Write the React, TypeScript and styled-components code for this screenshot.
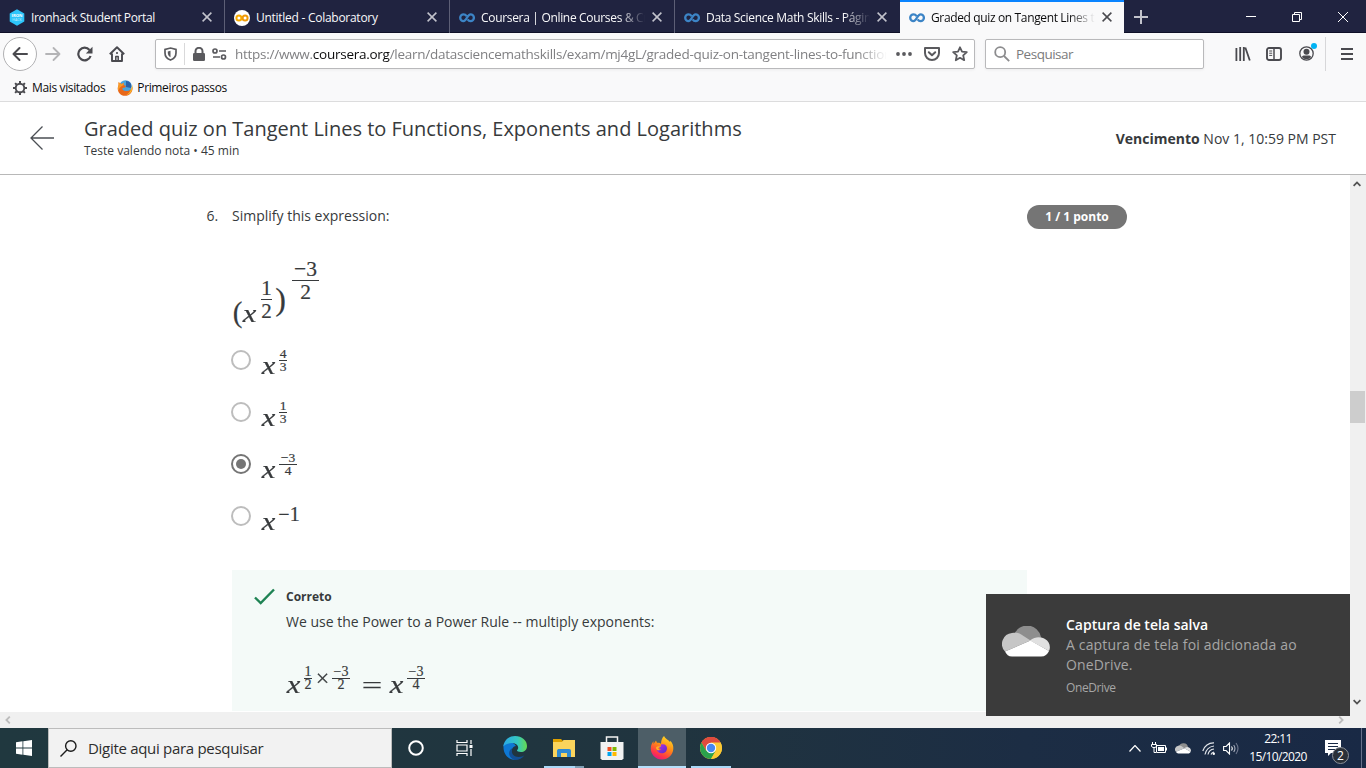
import React from 'react';
import styled, { createGlobalStyle, css } from 'styled-components';

const Global = createGlobalStyle`
  * { box-sizing: border-box; }
  body { margin: 0; width: 1366px; height: 768px; overflow: hidden; background: #fff; }
  svg { display: block; flex: none; }
`;

const ui = css`font-family: "Open Sans", "Noto Sans", sans-serif;`;

const Screen = styled.div`
  ${ui}
  width: 1366px; height: 768px; display: flex; flex-direction: column; overflow: hidden;
  color: #373a3c; white-space: nowrap;
`;

/* ---------- tab strip ---------- */
const TabStrip = styled.div`
  height: 33px; display: flex; background: #202340; box-shadow: inset 0 -1px #0f1028;
`;
const Tab = styled.div<{ $active?: boolean }>`
  width: ${p => (p.$active ? 224 : 225)}px; height: 33px; display: flex; align-items: center;
  padding: ${p => (p.$active ? 0 : 2)}px 12px 0 9px;
  border-right: ${p => (p.$active ? 'none' : '1px solid #5d5f76')};
  border-top: ${p => (p.$active ? '2px solid #0a84ff' : 'none')};
  background: ${p => (p.$active ? '#f9f9fa' : 'transparent')};
  color: ${p => (p.$active ? '#0c0c0d' : '#f9f9fa')};
  &:nth-child(4) { border-right-color: transparent; }
  svg.close { color: ${p => (p.$active ? '#4a4a4f' : '#c2c3cc')}; margin-left: 5px; margin-top: -1px; }
`;
const TabLabel = styled.span<{ $ls: number; $fade?: boolean }>`
  flex: 1; margin-left: 6px; overflow: hidden; font-size: 12px; line-height: 18px; 
  letter-spacing: ${p => p.$ls}px;
  ${p => p.$fade && css`mask-image: linear-gradient(to left, transparent 2px, #000 28px);`}
`;
const NewTab = styled.div`width: 34px; display: flex; align-items: center; justify-content: center; color: #c2c3cc;`;
const WindowButtons = styled.div`
  margin-left: auto; display: flex; align-items: center; color: #fff;
  > span { width: 46px; display: flex; justify-content: center; }
`;

/* ---------- toolbar ---------- */
const Toolbar = styled.div`
  height: 41px; display: flex; align-items: center; background: #f9f9fa; padding: 0 10px 0 3px; color: #4a4a4f;
`;
const BackButton = styled.div`
  width: 34px; height: 34px; border: 1px solid #b1b1b3; border-radius: 50%; background: #fff;
  display: flex; align-items: center; justify-content: center;
`;
const ToolIcon = styled.div<{ $ml: number; $dim?: boolean }>`
  margin-left: ${p => p.$ml}px; color: ${p => (p.$dim ? '#b4b4b6' : '#4a4a4f')};
  position: relative;
`;
const Field = styled.div<{ $w: number; $ml: number }>`
  width: ${p => p.$w}px; margin-left: ${p => p.$ml}px; height: 30px; background: #fff;
  border: 1px solid #b9b9bb; border-radius: 2px; display: flex; align-items: center; 
  color: #5a5a5e; box-shadow: 0 1px 3px rgba(0,0,0,.06);
`;
const FieldRule = styled.div`width: 1px; height: 22px; background: #d9d9da; margin: 0 8px 0 7px;`;
const Url = styled.div`
  width: 652px; margin-left: 8px; overflow: hidden; font-size: 13.5px; line-height: 20px; letter-spacing: -0.26px; color: #808083;
  mask-image: linear-gradient(to left, transparent 0, #000 30px);
  b { font-weight: 400; color: #0c0c0d; }
`;
const Placeholder = styled.span`margin-left: 6px; font-size: 13.5px; letter-spacing: -0.5px; color: #7b7b7d;`;
const ToolRule = styled.div`width: 1px; height: 34px; background: #d7d7d9; margin-left: 11px;`;
const Dot = styled.i`position: absolute; left: 12px; top: -3px; width: 6px; height: 6px; border-radius: 50%; background: #00b3f4;`;

const Bookmarks = styled.div`
  height: 28px; background: #f9f9fa; border-bottom: 1px solid #dcdcdd; display: flex; align-items: center; padding: 0 0 0 12px;
  font-size: 12px; color: #0c0c0d;
  span { margin-left: 4px; letter-spacing: -0.36px; }
  svg + span + svg { margin-left: 12px; }
`;

/* ---------- page header ---------- */
const PageHeader = styled.header`
  height: 73px; background: #fff; border-bottom: 1px solid #b8b8b8; display: flex; align-items: center; padding: 0 30px;
`;
const TitleGroup = styled.div`margin-left: 30px; margin-top: 1px; flex: 1;`;
const Title = styled.h1`margin: 0; font-size: 20px; line-height: 24px; font-weight: 400; color: #373a3c;`;
const Subtitle = styled.div`font-size: 12px; line-height: 18px; margin-top: 1px; color: #373a3c;`;
const Due = styled.div`font-size: 14px; line-height: 20px; margin-top: 1px; `;

/* ---------- quiz ---------- */
const Viewport = styled.div`height: 537px; display: flex; background: #fff;`;
const Quiz = styled.main`width: 1350px; height: 537px; overflow: hidden; display: flex; padding: 30px 0 0 206px;`;
const Number = styled.div`width: 26px; padding-left: .5px; font-size: 14px; line-height: 22px;`;
const Body = styled.div`width: 795px;`;
const Prompt = styled.div`font-size: 14px; line-height: 22px;`;
const Points = styled.div`
  width: 100px; height: 24px; border-radius: 12px; background: #757575; color: #fff; font-size: 12px; font-weight: 700;
  line-height: 24px; text-align: center;
`;
const MathRow = styled.div<{ $h: number; $mt?: number }>`
  height: ${p => p.$h}px; margin-top: ${p => p.$mt || 0}px; display: flex; align-items: flex-start;
  font-family: "Liberation Serif", "Times New Roman", serif; color: #373a3c; -webkit-text-stroke: .2px #373a3c;
`;
/* One glyph run: fixed advance, optical stretch and drop from the row's top. */
const Sym = styled.span<{ $w: number; $s: number; $t?: number; $l?: number; $x?: number; $y?: number; $i?: boolean }>`
  width: ${p => p.$w}px; font-size: ${p => p.$s}px; line-height: ${p => p.$s}px; margin-top: ${p => p.$t || 0}px; margin-left: ${p => p.$l || 0}px;
  font-style: ${p => (p.$i ? 'italic' : 'normal')}; display: flex; justify-content: center;
  transform: scale(${p => p.$x || 1}, ${p => p.$y || 1});
`;
const FracBox = styled.span<{ $w: number; $s: number; $t?: number; $l?: number; $gap: number }>`
  width: ${p => p.$w}px; margin-top: ${p => p.$t || 0}px; margin-left: ${p => p.$l || 0}px;
  font-size: ${p => p.$s}px; line-height: ${p => p.$gap}px; text-align: center;
  display: flex; flex-direction: column; align-items: center;
  i { display: block; width: 100%; height: 1px; background: #373a3c; }
  span { display: flex; height: ${p => p.$gap}px; }
`;
const Option = styled.div`height: 52px; display: flex; align-items: flex-start;`;
const Radio = styled.div<{ $on?: boolean }>`
  width: 20px; height: 20px; margin: 2px 11px 0 -1px; border-radius: 50%; border: 2px solid ${p => (p.$on ? '#757575' : '#bdbdbd')};
  display: flex; align-items: center; justify-content: center;
  &::after { content: ''; width: 10px; height: 10px; border-radius: 50%; background: ${p => (p.$on ? '#757575' : 'transparent')}; }
`;
const Feedback = styled.section`
  margin-top: 14px; height: 141px; background: #f4faf8; display: flex; padding: 18px 0 0 22px;
`;
const FeedbackBody = styled.div`margin-left: 11px; `;
const FeedbackTitle = styled.div`font-size: 12px; line-height: 18px; font-weight: 700;`;
const FeedbackText = styled.div`font-size: 14px; line-height: 22px; margin-top: 5px;`;

const VScroll = styled.div`
  width: 16px; background: #f0f0f0; display: flex; flex-direction: column; align-items: flex-start; padding: 5px 0 6px;
  > i { width: 15px; height: 32px; background: #cdcdcd; margin-top: 203px; }
  > svg { margin-left: 3px; }
  > svg:last-child { margin-top: auto; }
`;
const HScroll = styled.div`
  height: 16px; background: #f0f0f0; display: flex; align-items: center; justify-content: space-between; padding: 0 21px 1px 4px;
`;

/* ---------- taskbar ---------- */
const Taskbar = styled.footer`
  height: 40px; display: flex; background: linear-gradient(90deg, #20383f 0, #20343f 50%, #1c2d44 75%, #192945 100%); color: #fff;
`;
const Start = styled.div`width: 48px; display: flex; align-items: center; justify-content: center;`;
const SearchBox = styled.div`
  width: 344px; background: #f2f2f2; border: 1px solid #bcbcbc; display: flex; align-items: center; padding-left: 11px; color: #1c1c1c;
  span { font-size: 15px; letter-spacing: -0.3px; margin-left: 11px; color: #2d2d2d; }
`;
const App48 = styled.div<{ $on?: boolean; $line?: string; $w?: number }>`
  width: ${p => p.$w || 49}px; display: flex; align-items: center; justify-content: center;
  background: ${p => (p.$on ? '#4d5e67' : 'transparent')};
  ${p => p.$line && css`
    background-image: ${p.$line}; background-repeat: no-repeat; background-size: ${p.$on ? '100%' : '40px'} 2px; background-position: center bottom;`}
`;
const Tray = styled.div`margin-left: auto; display: flex; align-items: center;`;
const Clock = styled.div`
  width: 60px; margin: 0 16px 0 8px; text-align: center; font-size: 12px; line-height: 18px; letter-spacing: -0.62px;
`;
const Action = styled.div`position: relative; width: 37px; height: 40px; padding: 12px 0 0 1px;`;
const Badge = styled.b`
  position: absolute; left: 8px; top: 19px; width: 17px; height: 17px; border-radius: 50%; background: #2a3038; border: 1px solid #8b9098;
  font-size: 12px; font-weight: 400; line-height: 15px; text-align: center;
`;
const Peek = styled.i`width: 1px; height: 40px; background: #66708a; margin-right: 4px;`;

/* ---------- toast ---------- */
const Toast = styled.aside`
  position: absolute; left: 986px; top: 594px; width: 364px; height: 122px; background: #3b3b3b; display: flex; padding: 21px 0 0 16px;
  font-size: 15px; line-height: 20px; color: #a6a6a6;
  svg { margin-top: 11px; }
`;
const ToastText = styled.div`margin-left: 16px;`;
const ToastTitle = styled.div`font-size: 14px; font-weight: 600; color: #fff; letter-spacing: 0;`;
const ToastLine = styled.div`font-size: 14px; letter-spacing: 0.15px; `;
const ToastSource = styled.div`font-size: 12px; margin-top: 3px; letter-spacing: -0.4px;`;

const Close = () => (
  <svg className="close" width="10" height="10" viewBox="0 0 10 10" stroke="currentColor" strokeWidth="1.5"><path d="M.6.6 9.4 9.4M9.4.6.6 9.4" /></svg>
);
const CourseraIcon = () => (
  <svg width="16" height="16" viewBox="0 0 16 16" fill="none" stroke="#3c84c6" strokeWidth="2.3">
    <path d="M7.6 6.1C6.6 4.7 5.6 4.3 4.6 4.3a3.4 3.4 0 1 0 0 6.8c2.8 0 3.9-6.8 6.9-6.8a3.2 3.2 0 1 1 0 6.8c-1.300 0-2.200-.7-2.900-1.700" />
  </svg>
);
const IronIcon = () => (
  <svg width="16" height="17" viewBox="0 0 16 17"><path fill="#2dc5fa" d="M8 .3 15.300 4.400v8.200L8 16.700.7 12.600V4.400z" />
    <text x="8" y="7.600" textAnchor="middle" fontSize="4.200" fontWeight="700" fill="#fff" fontFamily="Open Sans">IRON</text>
    <text x="8" y="11.600" textAnchor="middle" fontSize="3.600" fill="#c9f0ff" fontFamily="Open Sans">HACK</text></svg>
);
const ColabIcon = () => (
  <svg width="16" height="16" viewBox="0 0 16 16"><circle cx="8" cy="8" r="8" fill="#fff" />
    <g fill="none" strokeWidth="2"><circle cx="4.900" cy="8" r="2.500" stroke="#f9ab00" /><circle cx="11.100" cy="8" r="2.500" stroke="#f09a08" /></g></svg>
);
const FirefoxIcon = ({ s }: { s: number }) => (
  <svg width={s} height={s} viewBox="0 0 24 24">
    <defs>
      <linearGradient id="ff" x1=".8" y1="0" x2=".3" y2="1"><stop offset="0" stopColor="#ffe226" /><stop offset=".45" stopColor="#ff8a16" /><stop offset=".8" stopColor="#ff3647" /><stop offset="1" stopColor="#e31587" /></linearGradient>
      <linearGradient id="fp" x1="0" y1="0" x2="1" y2="1"><stop offset="0" stopColor="#b833e1" /><stop offset="1" stopColor="#592acb" /></linearGradient>
    </defs>
    <path fill="url(#ff)" d="M14 0c1 2.500 4.500 4 6 6l.4-1.200C22.800 7.300 23.500 10 23.300 13 22.800 19 18 23.500 12 23.500 5.500 23.500.8 18.500.8 12.500c0-3.500 1.500-6 2.700-7.200V8L6 4.500l1 2.300c2-.3 3.300.2 4 1.200C11 4.500 12 2 14 0z" />
    <path fill="url(#fp)" d="M11 8.500c3.500-1.200 6 .8 6 3.800 0 3-2.300 5-5.300 5-2.700 0-4.700-1.800-5-4 1.500 1.500 3 1 4.300 0l-2-1.300c-1 0-1.500-.5-1.200-1.300L11 10z" />
    <path fill="#ffb01f" d="M6 11.500c1.500-1.800 3-1 5-1.500-.7 1-1.500 1.700-3 2.200l1.500 1.800c-1.500.8-3.500 0-3.500-2.500z" />
  </svg>
);
const OldFirefox = () => (
  <svg width="16" height="16" viewBox="0 0 16 16"><circle cx="8.500" cy="6.500" r="6.300" fill="#4aa3dc" /><path fill="#2a62a8" d="M9 1c4 0 6 3 5 7L9 7z" />
    <path fill="#e8681a" d="M1.500 2.300 1.600 5C-.8 9.500 2 15.800 8 15.800c5 0 8-3.800 7.600-9.300-1 3-3 4.700-6 4.500C6.500 11.500 5 9.500 5.500 8l2.500-.5L9 6 6.500 5 6.800 3 4.500 4z" /><path fill="#f79a28" d="M1.500 2.300 1.600 5C.8 7 .5 9 1.500 11 2 8 3.500 6.500 6.500 5L6.800 3 4.500 4z" /><path fill="#fbc02d" d="M15.300 4.500c1 5-1.500 9.500-6 10.500 3.500-2 5-5 6-10.500z" /></svg>
);
const Cloud = ({ w, h }: { w: number; h: number }) => (
  <svg width={w} height={h} viewBox="0 0 48 31">
    <path fill="#8e8e8e" d="M12 9A14 14 0 0 1 39 11L28 15z" />
    <path fill="#c6c6c6" d="M10 7c5-1 8 .5 10 2l8.500 5.500L3 25.500A11 11 0 0 1 10 7z" />
    <path fill="#e0e0e0" d="M28 14.500c5-4 11-4 15-1.500 4.500 2.500 6 8 4 12z" />
    <path fill="#fff" d="M3 25.500 28.500 14.500 47 25c-1.500 3.500-4 5.500-8 5.500H10c-3.500 0-5.500-2-7-5z" />
  </svg>
);
const Mag = ({ s }: { s: number }) => (
  <svg width={s} height={s} viewBox="0 0 16 16" fill="none" stroke="#8c8c8e" strokeWidth="1.800"><circle cx="6.200" cy="6.200" r="5" /><path d="m10 10 5.200 5.200" /></svg>
);
const Chev = ({ r, c = '#505050' }: { r: number; c?: string }) => (
  <svg width="8" height="8" viewBox="0 0 8 8" fill="none" stroke={c} strokeWidth="1.800"><path transform={`rotate(${r} 4 4)`} d="M.6 5.800 4 2.400l3.400 3.400" /></svg>
);

type FracProps = { n: string; d: string; w: number; s: number; gap: number; t?: number; l?: number };
const Frac = ({ n, d, w, s, gap, t, l }: FracProps) => (
  <FracBox $w={w} $s={s} $gap={gap} $t={t} $l={l}><span>{n}</span><i /><span>{d}</span></FracBox>
);
const X = ({ t, l }: { t: number; l?: number }) => <Sym $w={13} $s={26} $t={t} $l={l} $x={1.18} $i>x</Sym>;

export default function App() {
  return (
    <Screen>
      <Global />
      <TabStrip>
        <Tab><IronIcon /><TabLabel $ls={-0.37}>Ironhack Student Portal</TabLabel><Close /></Tab>
        <Tab><ColabIcon /><TabLabel $ls={-0.27}>Untitled - Colaboratory</TabLabel><Close /></Tab>
        <Tab><CourseraIcon /><TabLabel $ls={-0.32} $fade>Coursera | Online Courses &amp; Credentials</TabLabel><Close /></Tab>
        <Tab><CourseraIcon /><TabLabel $ls={-0.32} $fade>Data Science Math Skills - Página inicial</TabLabel><Close /></Tab>
        <Tab $active><CourseraIcon /><TabLabel $ls={-0.36} $fade>Graded quiz on Tangent Lines to Functions</TabLabel><Close /></Tab>
        <NewTab><svg width="14" height="14" viewBox="0 0 14 14" stroke="currentColor" strokeWidth="2"><path d="M7 0v14M0 7h14" /></svg></NewTab>
        <WindowButtons>
          <span><svg width="10" height="10" viewBox="0 0 10 10" stroke="currentColor"><path d="M0 4.500h10" /></svg></span>
          <span><svg width="10" height="10" viewBox="0 0 10 10" fill="none" stroke="currentColor"><path d="M.5 2.500h7v7h-7zM2.500 2.500v-2h7v7h-2" /></svg></span>
          <span><svg width="10" height="10" viewBox="0 0 10 10" stroke="currentColor"><path d="m0 0 10 10M10 0 0 10" /></svg></span>
        </WindowButtons>
      </TabStrip>

      <Toolbar>
        <BackButton><svg width="16" height="16" viewBox="0 0 16 16" fill="none" stroke="currentColor" strokeWidth="2" strokeLinecap="round" strokeLinejoin="round"><path d="M15 8H1.500M7.500 2l-6 6 6 6" /></svg></BackButton>
        <ToolIcon $ml={8} $dim><svg width="16" height="16" viewBox="0 0 16 16" fill="none" stroke="currentColor" strokeWidth="1.800" strokeLinecap="round" strokeLinejoin="round"><path d="M1 8h13.500M8.500 2l6 6-6 6" /></svg></ToolIcon>
        <ToolIcon $ml={16}><svg width="16" height="16" viewBox="0 0 16 16" fill="none" stroke="currentColor" strokeWidth="2.200"><path d="M13.600 10A6.300 6.300 0 1 1 12.500 4" /><path fill="currentColor" stroke="none" d="M15.500.8v6.700H8.800z" /></svg></ToolIcon>
        <ToolIcon $ml={16}><svg width="16" height="16" viewBox="0 0 16 16" fill="none" stroke="currentColor" strokeWidth="1.900" strokeLinejoin="round"><path d="M.8 8.300 8 1.200l7.200 7.100M3 7.500V15h10V7.500" /><path d="M6.800 15v-4.500h2.400V15" strokeWidth="1.500" /><path d="M7.200 7h1.600" /></svg></ToolIcon>
        <Field $w={820} $ml={30}>
          <svg width="13" height="14" viewBox="0 0 13 14" style={{ marginLeft: 8 }} fill="none" stroke="currentColor" strokeWidth="1.700"><path d="M6.500 1 12 2.300V6c0 3.500-2 5.700-5.500 7C3 11.700 1 9.500 1 6V2.300z" /><path d="M6.500 3.800v6.400C4.800 9.300 3.800 8 3.800 6V4.500z" fill="currentColor" stroke="none" /></svg>
          <FieldRule />
          <svg width="12" height="14" viewBox="0 0 12 14"><rect y="6" width="12" height="8" rx="1.200" fill="currentColor" /><path d="M2.500 7V4.300a3.500 3.500 0 0 1 7 0V7" fill="none" stroke="currentColor" strokeWidth="2" /></svg>
          <svg width="15" height="12" viewBox="0 0 15 12" style={{ marginLeft: 7 }} fill="none" stroke="currentColor" strokeWidth="1.700"><circle cx="3" cy="3" r="2" /><path d="M7 3h7M1 9h7" /><circle cx="11.500" cy="9" r="2" /></svg>
          <Url>https://www.<b>coursera.org</b>/learn/datasciencemathskills/exam/mj4gL/graded-quiz-on-tangent-lines-to-functions</Url>
          <svg width="16" height="4" viewBox="0 0 16 4" style={{ marginLeft: 9 }} fill="currentColor"><circle cx="2" cy="2" r="1.900" /><circle cx="8" cy="2" r="1.900" /><circle cx="14" cy="2" r="1.900" /></svg>
          <svg width="16" height="14" viewBox="0 0 16 14" style={{ marginLeft: 12 }} fill="none" stroke="currentColor" strokeWidth="2" strokeLinejoin="round" strokeLinecap="round"><path d="M1 1h14v5a7 7 0 0 1-14 0z" /><path d="m4.800 5.200 3.200 3 3.200-3" /></svg>
          <svg width="16" height="16" viewBox="0 0 16 16" style={{ marginLeft: 12 }} fill="none" stroke="currentColor" strokeWidth="1.800" strokeLinejoin="round"><path d="m8 1.300 2 4.400 4.800.5-3.600 3.200 1 4.800L8 11.800l-4.200 2.400 1-4.800L1.200 6.200 6 5.700z" /></svg>
        </Field>
        <Field $w={219} $ml={10}><span style={{ marginLeft: 8 }}><Mag s={16} /></span><Placeholder>Pesquisar</Placeholder></Field>
        <ToolIcon $ml={31}><svg width="16" height="14" viewBox="0 0 16 14" stroke="currentColor" strokeWidth="1.800"><path d="M1.400 1v13M5.200 0v14M8.800 0v14M10.300.5l4.500 13" /></svg></ToolIcon>
        <ToolIcon $ml={15}><svg width="16" height="14" viewBox="0 0 16 14" fill="none" stroke="currentColor" strokeWidth="1.900"><rect x="1" y="1" width="14" height="12" rx="2" /><path d="M8 1v12" strokeWidth="1.500" /><path d="M3.200 4h3M3.200 6.200h3M3.200 8.400h3" strokeWidth="1" /></svg></ToolIcon>
        <ToolIcon $ml={17}><svg width="15" height="15" viewBox="0 0 15 15" fill="none" stroke="currentColor" strokeWidth="1.300"><circle cx="7.500" cy="7.500" r="6.700" /><g fill="currentColor" stroke="none"><circle cx="7.500" cy="5.800" r="3" /><path d="M2.800 11c1-2 2.500-1.500 4.700-1.500s3.700-.5 4.700 1.500A6 6 0 0 1 2.800 11z" /></g></svg><Dot /></ToolIcon>
        <ToolRule />
        <ToolIcon $ml={15}><svg width="12" height="12" viewBox="0 0 12 12" stroke="currentColor" strokeWidth="1.900"><path d="M0 1h12M0 6h12M0 11h12" /></svg></ToolIcon>
      </Toolbar>

      <Bookmarks>
        <svg width="16" height="16" viewBox="0 0 16 16" fill="none" stroke="#4a4a4f"><circle cx="8" cy="8" r="4.300" strokeWidth="1.900" /><path strokeWidth="2" d="M8 1v2.400M8 12.600V15M1 8h2.400M12.600 8H15M3.100 3.100l1.600 1.600M11.300 11.300l1.600 1.600M3.100 12.900l1.600-1.600M11.300 4.700l1.600-1.600" /></svg>
        <span>Mais visitados</span>
        <OldFirefox /><span>Primeiros passos</span>
      </Bookmarks>

      <PageHeader>
        <svg width="24" height="24" viewBox="0 0 24 24" fill="none" stroke="#4b4f54" strokeWidth="1.300"><path d="M24 12H1.200M12.500.5 1 12l11.500 11.500" /></svg>
        <TitleGroup>
          <Title>Graded quiz on Tangent Lines to Functions, Exponents and Logarithms</Title>
          <Subtitle>Teste valendo nota • 45 min</Subtitle>
        </TitleGroup>
        <Due><b>Vencimento</b> Nov 1, 10:59 PM PST</Due>
      </PageHeader>

      <Viewport>
        <Quiz>
          <Number>6.</Number>
          <Body>
            <Prompt>Simplify this expression:</Prompt>
            <MathRow $h={88} $mt={33}>
              <Sym $w={9} $s={29} $t={38} $l={1}>(</Sym>
              <X t={41} l={1} />
              <Frac n="1" d="2" w={11} s={21} gap={22} t={17} l={5} />
              <Sym $w={9} $s={32} $t={23} $l={4}>)</Sym>
              <Frac n="−3" d="2" w={27} s={21.5} gap={22} t={-2} l={7} />
            </MathRow>
            <Option><Radio /><MathRow $h={40}><X t={5} /><Frac n="4" d="3" w={8} s={13.5} gap={12} t={0} l={4} /></MathRow></Option>
            <Option><Radio /><MathRow $h={40}><X t={5} /><Frac n="1" d="3" w={8} s={13.5} gap={12} t={0} l={4} /></MathRow></Option>
            <Option><Radio $on /><MathRow $h={40}><X t={5} /><Frac n="−3" d="4" w={18} s={13.5} gap={12} t={0} l={4} /></MathRow></Option>
            <Option><Radio /><MathRow $h={40}><X t={5} /><Sym $w={22} $s={20} $t={0} $l={3}>−1</Sym></MathRow></Option>
            <Feedback>
              <svg width="21" height="17" viewBox="0 0 21 17" fill="none" stroke="#1f8354" strokeWidth="2.400"><path d="M1 9.500 6.700 15 20 1.500" /></svg>
              <FeedbackBody>
                <FeedbackTitle>Correto</FeedbackTitle>
                <FeedbackText>We use the Power to a Power Rule -- multiply exponents:</FeedbackText>
                <MathRow $h={50} $mt={33}>
                  <X t={6} l={1} />
                  <Frac n="1" d="2" w={8} s={14} gap={12} t={0} l={4} />
                  <Sym $w={11} $s={20} $t={2} $l={5} $x={1.2} $y={1.2}>×</Sym>
                  <Frac n="−3" d="2" w={18} s={14} gap={12} t={0} l={4} />
                  <Sym $w={20} $s={26} $t={7} $l={12} $x={1.4}>=</Sym>
                  <X t={6} l={8} />
                  <Frac n="−3" d="4" w={18} s={14} gap={12} t={0} l={4} />
                </MathRow>
              </FeedbackBody>
            </Feedback>
          </Body>
          <Points>1 / 1 ponto</Points>
        </Quiz>
        <VScroll><Chev r={0} /><i /><Chev r={180} /></VScroll>
      </Viewport>
      <HScroll><Chev r={-90} c="#bcbcbc" /><Chev r={90} c="#bcbcbc" /></HScroll>

      <Taskbar>
        <Start><svg width="16" height="16" viewBox="0 0 16 16" fill="#fff"><path d="M0 2.200 6.500 1.300v6.300H0zM7.300 1.200 16 0v7.600H7.300zM0 8.400h6.500v6.300L0 13.800zM7.300 8.400H16V16l-8.700-1.200z" /></svg></Start>
        <SearchBox>
          <svg width="17" height="17" viewBox="0 0 17 17" fill="none" stroke="currentColor" strokeWidth="1.400"><circle cx="10.800" cy="6" r="5.200" /><path d="M7.200 9.700.5 16.400" /></svg>
          <span>Digite aqui para pesquisar</span>
        </SearchBox>
        <App48 $w={48}><svg width="16" height="16" viewBox="0 0 16 16" fill="none" stroke="#fff" strokeWidth="2"><circle cx="8" cy="8" r="6.800" /></svg></App48>
        <App48 $w={48}><svg width="17" height="16" viewBox="0 0 17 16" fill="none" stroke="#fff" strokeWidth="1.200"><path d="M1 5h10v6H1zM1 0v2.500h10V0M1 16v-2.500h10V16M15 0v4M15 9v7" /><path d="M13.500 5h3v3h-3z" fill="#fff" stroke="none" /></svg></App48>
        <App48 $w={53}>
          <svg width="24" height="24" viewBox="0 0 24 24"><defs><linearGradient id="e1" x1="0" x2="1"><stop offset="0" stopColor="#2ba9e8" /><stop offset=".6" stopColor="#35c7c0" /><stop offset="1" stopColor="#65d94f" /></linearGradient></defs>
            <path fill="#0e78d4" d="M.5 10C0 18 5 24 12.500 24 8 22 7 17 9 13c1-2 2.500-3 4-3C10 5 2 4 .5 10z" />
            <path fill="#124f94" d="M9.500 12c-2 5 1 9 6 9 3 0 5-1 6-2-2 3.500-5.500 5-9.500 5-5-1-8-7-4-11z" />
            <path fill="url(#e1)" d="M.3 10.500C1 4.500 6 0 12 0c7 0 12 4.500 12 10 0 4-3 6-6 6-2.500 0-4-.8-4-1.500 0-.6 1.200-1.200 1.200-2.800 0-2-2.200-4.700-6.200-4.700-4 0-7.500 1.500-8.700 3.500z" /></svg>
        </App48>
        <App48 $w={45} $line="linear-gradient(90deg,#a9d8f7 0 31px,#7f9fb4 31px)">
          <svg width="22" height="20" viewBox="0 0 22 20"><path fill="#e0a100" d="M0 1h8l2 2v4H0z" /><path fill="#fbd45c" d="M0 4h9l1.500-2H22v17H0z" /><path fill="#2f8ad2" d="M4 19v-6c0-1.500 1-2 2-2h10c1.500 0 2 .7 2 2v6h-4v-4H8v4z" /></svg>
        </App48>
        <App48 $w={52}>
          <svg width="24" height="24" viewBox="0 0 24 24"><path d="M6.500 6V1h11v5" fill="none" stroke="#f2f2f2" strokeWidth="1.500" /><path fill="#f2f2f2" d="M.5 6h23v16.500L22 24H2L.5 22.500z" /><path fill="#f25022" d="M7.500 11H11.500v4h-4z" /><path fill="#7fba00" d="M12.500 11h4v4h-4z" /><path fill="#00a4ef" d="M7.500 16h4v4h-4z" /><path fill="#ffb900" d="M12.500 16h4v4h-4z" /></svg>
        </App48>
        <App48 $w={48} $on $line="linear-gradient(#b5dffb,#b5dffb)"><FirefoxIcon s={24} /></App48>
        <App48 $w={50} $line="linear-gradient(#a9d8f7,#a9d8f7)">
          <svg width="22" height="22" viewBox="0 0 22 22"><circle cx="11" cy="11" r="11" fill="#fcc934" /><path fill="#df4b3e" d="M11 11 1.500 5.500A11 11 0 0 1 20.500 5.500z" /><path fill="#df4b3e" d="M11 5.500h9.500A11 11 0 0 0 1.500 5.500L6.200 13.700z" /><path fill="#2ba24c" d="M1.500 5.500A11 11 0 0 0 11 22l4.800-8.300H6.200z" /><path fill="#fcc934" d="M15.800 13.700 11 22A11 11 0 0 0 20.500 5.500H11z" /><circle cx="11" cy="11" r="5.200" fill="#fff" /><circle cx="11" cy="11" r="4.200" fill="#4787f2" /></svg>
        </App48>
        <Tray>
          <svg width="12" height="7" viewBox="0 0 12 7" fill="none" stroke="#fff" strokeWidth="1.200"><path d="m.5 6.500 5.500-6 5.500 6" /></svg>
          <svg width="17" height="12" viewBox="0 0 17 12" style={{ marginLeft: 10 }} fill="none" stroke="#fff"><path d="M5.500 3.500h9v7h-9zM1.500 0v2M4.500 0v2M.5 2.500h5v2l-1.500 1H2L.5 4.500zM3 6v4.500h2M15.500 5.500v3" /><path fill="#fff" stroke="none" d="M7 5h6v4H7z" /></svg>
          <span style={{ marginLeft: 7 }}><Cloud w={16} h={11} /></span>
          <svg width="14" height="13" viewBox="0 0 14 13" style={{ marginLeft: 11 }} fill="none" stroke="#e2e5ea" strokeWidth="1.200"><path d="M.8 9A11 11 0 0 1 12 .8M3 12.500A10.500 10.500 0 0 1 12 4M6 12.500A7 7 0 0 1 12 7M9 12.500A4 4 0 0 1 12 10" /><circle cx="11.800" cy="11.800" r="1.200" fill="#fff" stroke="none" /></svg>
          <svg width="17" height="13" viewBox="0 0 17 13" style={{ marginLeft: 7 }} fill="none" stroke="#fff" strokeWidth="1.100"><path d="M.6 4.500h2.500L6.500 1v11L3.100 8.500H.6zM8.500 4.500q1.500 2 0 4" /><path stroke="#aab0be" d="M10.700 3q2.500 3.500 0 7" /><path stroke="#6f788e" d="M13 1q4 5.500 0 11" /></svg>
          <Clock>22:11<br />15/10/2020</Clock>
          <Action>
            <svg width="16" height="16" viewBox="0 0 16 16"><path fill="#fff" d="M0 0h16v13H6l-3 3v-3H0z" /><path stroke="#192945" d="M3 3.500h10M3 6.500h10M3 9.500h7" /></svg>
            <Badge>2</Badge>
          </Action>
          <Peek />
        </Tray>
      </Taskbar>

      <Toast>
        <Cloud w={48} h={31} />
        <ToastText>
          <ToastTitle>Captura de tela salva</ToastTitle>
          <ToastLine>A captura de tela foi adicionada ao<br />OneDrive.</ToastLine>
          <ToastSource>OneDrive</ToastSource>
        </ToastText>
      </Toast>
    </Screen>
  );
}
